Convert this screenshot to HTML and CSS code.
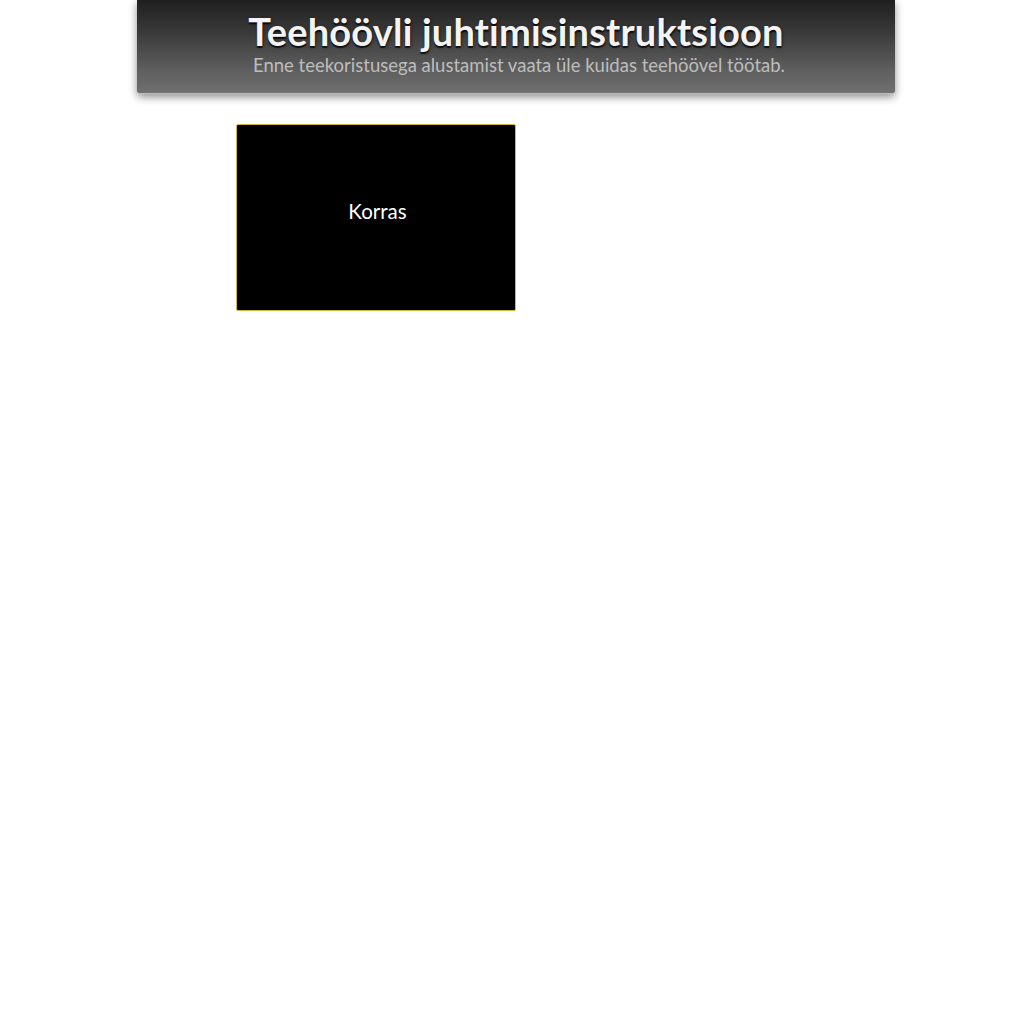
FILE: index.html
```html
<!DOCTYPE html>
<html lang="et">
<head>
<meta charset="utf-8">
<title>Teehöövli juhtimisinstruktsioon</title>
<link rel="stylesheet" href="styles.css">
</head>
<body>
<header class="header">
  <h1 class="title">Teehöövli juhtimisinstruktsioon</h1>
  <p class="subtitle">Enne teekoristusega alustamist vaata üle kuidas teehöövel töötab.</p>
</header>
<main class="content">
  <div class="status-box">
    <span class="status-text">Korras</span>
  </div>
</main>
</body>
</html>
```
FILE: styles.css
```css
html, body {
  margin: 0;
  padding: 0;
  background: #ffffff;
}
body {
  font-family: Lato, "Open Sans", sans-serif;
}
.header {
  box-sizing: border-box;
  width: 758px;
  height: 94px;
  margin: 0 0 0 137px;
  padding-top: 9px;
  background: linear-gradient(to bottom, #1f1f1f 0%, #3a3a3a 35%, #5e5e5e 75%, #707070 100%);
  border-bottom: 1px solid #bdbdbd;
  border-radius: 0 0 3px 3px;
  box-shadow: 0 3px 8px rgba(0, 0, 0, 0.45);
  text-align: center;
}
.title {
  margin: 0;
  font-family: Lato, sans-serif;
  font-weight: bold;
  font-size: 38px;
  line-height: 44px;
  color: #f4f4f4;
  letter-spacing: 0.2px;
  text-shadow: 0 2px 1px rgba(0,0,0,0.7), 1px 1px 3px rgba(0,0,0,0.5);
}
.subtitle {
  margin: 1px 0 0;
  font-family: Lato, sans-serif;
  font-weight: normal;
  font-size: 18.5px;
  line-height: 22px;
  color: #bdbdbd;
  padding-left: 6px;
}
.content {
  padding: 30px 0 0 236px;
}
.status-box {
  box-sizing: border-box;
  width: 280px;
  height: 187px;
  background: #000;
  border: 1px solid #d9b933;
  border-radius: 2px;
  display: flex;
  align-items: center;
  justify-content: center;
  padding-bottom: 14px;
}
.status-text {
  color: #fff;
  font-family: Lato, sans-serif;
  font-size: 20.5px;
  padding-left: 3px;
}
```
